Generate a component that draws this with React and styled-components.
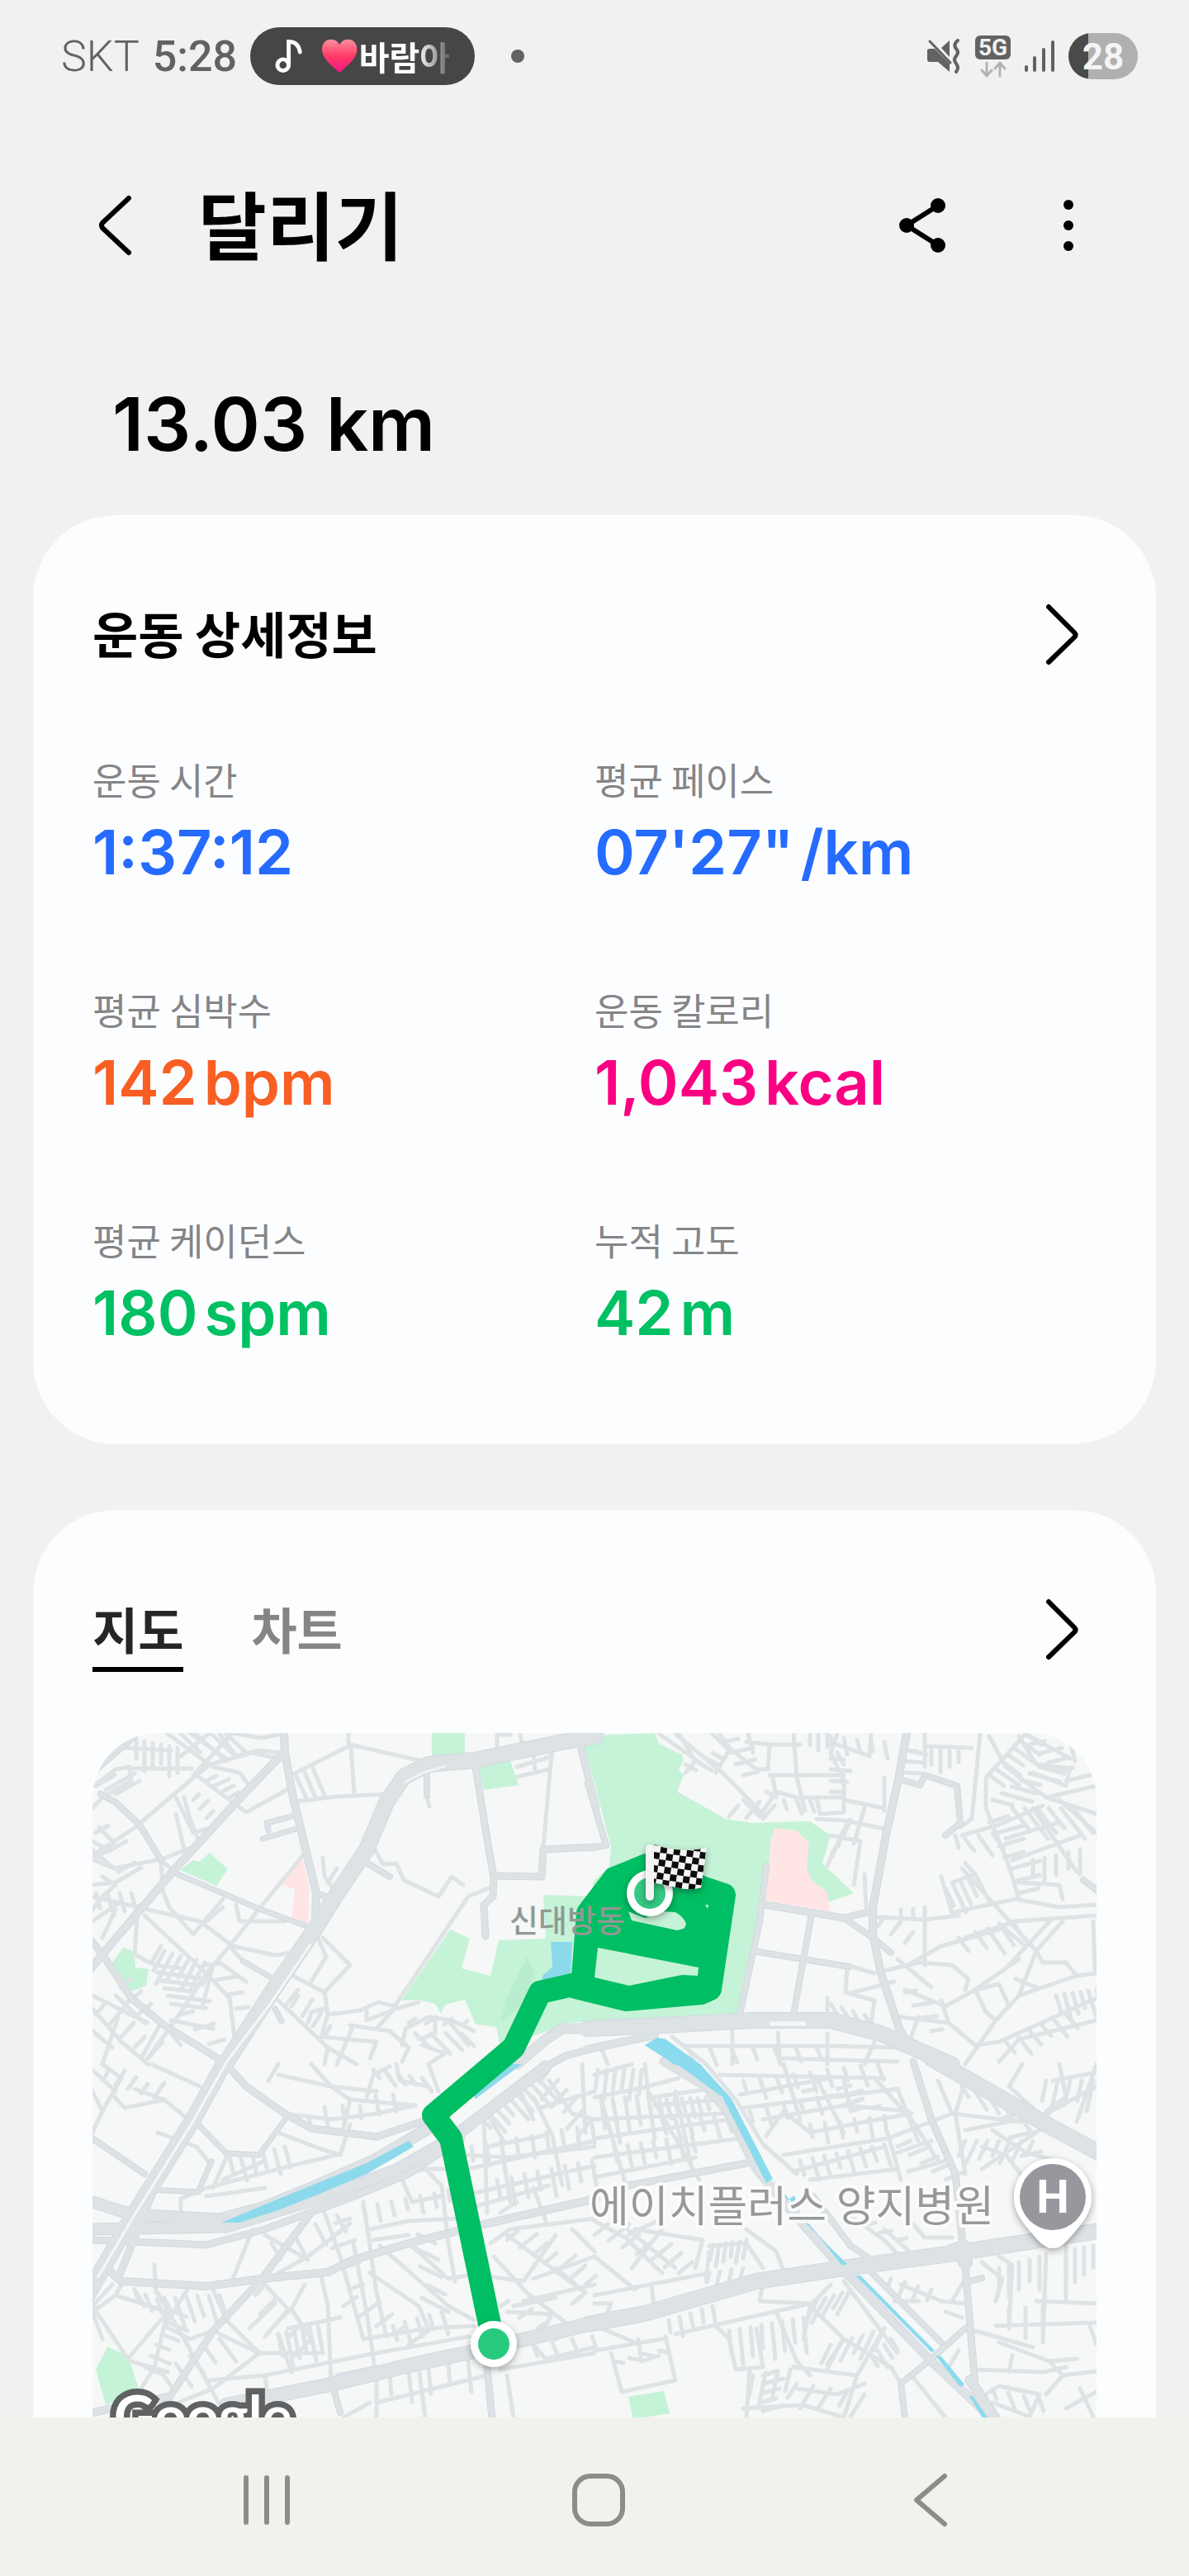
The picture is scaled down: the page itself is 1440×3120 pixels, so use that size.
import React, { useState } from "react";
import styled, { createGlobalStyle } from "styled-components";

const GlobalStyle = createGlobalStyle`
  * {
    box-sizing: border-box;
  }

  body {
    margin: 0;
    background: #f1f1f3;
    font-family: "Noto Sans CJK KR", sans-serif;
  }

  button {
    margin: 0;
    padding: 0;
    border: 0;
    background: none;
    color: inherit;
    font: inherit;
    cursor: pointer;
  }
`;

const Screen = styled.div`
  display: flex;
  flex-direction: column;
  height: 100vh;
  overflow: hidden;
  background: #f1f1f3;
`;

const StatusBar = styled.div`
  display: flex;
  flex: none;
  align-items: center;
  justify-content: space-between;
  height: 136px;
  padding: 0 62px 0 74px;
  color: #626262;
  font-family: Roboto, sans-serif;
  font-size: 52px;
`;

const StatusGroup = styled.div`
  display: flex;
  align-items: center;
  gap: 16px;
`;

const Carrier = styled.span`
  font-weight: 300;
`;

const Clock = styled.span`
  font-weight: 500;
`;

const NowPlaying = styled.div`
  display: flex;
  align-items: center;
  gap: 24px;
  width: 272px;
  height: 70px;
  padding: 0 30px;
  border-radius: 35px;
  background: #454746;
  color: #fff;
`;

const Song = styled.span`
  display: flex;
  align-items: center;
  gap: 2px;
  overflow: hidden;
  font-family: "Noto Sans CJK KR", sans-serif;
  font-size: 40px;
  font-weight: 700;
  line-height: 56px;
  white-space: nowrap;
  mask-image: linear-gradient(90deg, #000 74%, rgba(0, 0, 0, 0.15) 100%);
`;

const Dot = styled.span`
  width: 16px;
  height: 16px;
  margin-left: 28px;
  border-radius: 50%;
  background: #626262;
`;

const Network = styled.div`
  display: flex;
  flex-direction: column;
  align-items: center;
  gap: 2px;
`;

const NetworkBadge = styled.span`
  width: 43px;
  border-radius: 6px;
  background: #626262;
  color: #f1f1f3;
  font-size: 28px;
  font-weight: 700;
  line-height: 29px;
  text-align: center;
`;

const Battery = styled.div`
  width: 84px;
  height: 56px;
  border-radius: 28px;
  background: linear-gradient(90deg, #4a4a4a 28%, #b0b0b0 28%);
  color: #f4f4f4;
  font-size: 44px;
  font-weight: 700;
  line-height: 58px;
  text-align: center;
`;

const Header = styled.header`
  display: flex;
  flex: none;
  align-items: center;
  height: 274px;
  padding: 0 110px 0 104px;
`;

const Title = styled.h1`
  flex: 1;
  margin: 0 0 0 64px;
  padding-bottom: 8px;
  font-size: 90px;
  font-weight: 700;
  line-height: 120px;
`;

const HeaderActions = styled.div`
  display: flex;
  gap: 104px;
`;

const IconButton = styled.button`
  display: flex;
  align-items: center;
  justify-content: center;
  width: ${({ $size }) => $size}px;
  height: ${({ $size }) => $size}px;
`;

const Main = styled.main`
  display: flex;
  flex: 1;
  flex-direction: column;
  gap: 80px;
  min-height: 0;
  padding: 0 40px;
  overflow: hidden;
`;

const Distance = styled.p`
  margin: 50px 0 -24px;
  padding-left: 96px;
  font-family: Inter, sans-serif;
  font-size: 90px;
  font-weight: 600;
  line-height: 108px;
`;

const Card = styled.section`
  flex: none;
  padding: 104px 72px 115px;
  border-radius: 100px;
  background: #fcfdff;
`;

const CardHead = styled.div`
  display: flex;
  align-items: flex-start;
  justify-content: space-between;
  margin-bottom: ${({ $space }) => $space}px;
`;

const CardTitle = styled.h2`
  margin: 0;
  font-size: 60px;
  font-weight: 700;
  line-height: 76px;
`;

const Stats = styled.dl`
  display: grid;
  grid-template-columns: 1fr 1fr;
  row-gap: 120px;
  margin: 0;
`;

const StatLabel = styled.dt`
  margin-bottom: 17px;
  color: #858587;
  font-size: 45px;
  line-height: 54px;
`;

const StatValue = styled.dd`
  display: flex;
  gap: 8px;
  margin: 0;
  color: ${({ $color }) => $color};
  font-family: Inter, sans-serif;
  font-size: 74px;
  font-weight: 600;
  line-height: 88px;
`;

const Tabs = styled.div`
  display: flex;
  gap: 82px;
`;

const Tab = styled.button`
  padding-bottom: 8px;
  border-bottom: 6px solid ${({ $active }) => ($active ? "#000" : "transparent")};
  color: ${({ $active }) => ($active ? "#252527" : "#858587")};
  font-size: 60px;
  font-weight: 700;
  line-height: 78px;
`;

const MapFrame = styled.div`
  overflow: hidden;
  border-radius: 80px;

  svg {
    display: block;
    width: 100%;
  }
`;

const NavBar = styled.nav`
  display: flex;
  flex: none;
  align-items: center;
  justify-content: center;
  gap: 282px;
  height: 192px;
  padding: 8px 0 0 10px;
  background: #f0f2ed;
`;

const STATS = [
  { label: "운동 시간", value: "1:37:12", color: "#256bff" },
  { label: "평균 페이스", value: "07'27\"", unit: "/km", color: "#256bff" },
  { label: "평균 심박수", value: "142", unit: "bpm", color: "#f95e22" },
  { label: "운동 칼로리", value: "1,043", unit: "kcal", color: "#fb0082" },
  { label: "평균 케이던스", value: "180", unit: "spm", color: "#00c064" },
  { label: "누적 고도", value: "42", unit: "m", color: "#00c064" },
];

// Each tile keeps its own coordinates; x, y, sx and sy place it on the map.
// roads: [width, points], combs: [x1, y1, x2, y2, dx, dy, count]
const TILES = [
  {
    x: -12,
    y: -19,
    sx: 0.3954,
    sy: 0.3333,
    parks: [
      "1070,57 1170,57 1170,135 1070,148",
      "1215,180 1310,155 1335,245 1230,265",
      "298,555 340,518 358,525 390,493 445,553 410,612",
      "92,890 125,837 158,850 162,908 202,915 195,975 150,997",
      "1125,770 1185,805 1162,912 1250,940 1275,810 1420,805 1410,645 1572,650 1572,1105 1490,1110 1400,1150 1280,1200 1268,1125 1205,1115 1170,1025 1110,1045 1098,1078 1080,1042 1030,1025 975,1030",
    ],
    shade: ["1360,870 1385,930 1340,1050 1280,1110 1300,1020"],
    pink: ["672,510 695,620 690,755 640,735 650,625 605,605"],
    water: ["1435,817 1500,817 1495,945 1405,960 1408,940 1438,905"],
    minor: [
      "180,380 350,210 390,170 520,130 600,150",
      "30,330 60,290 150,230 145,180 100,190 35,250",
      "260,60 400,180 480,200 510,250",
      "350,210 460,310 500,345 625,265",
      "420,60 470,140 540,120 610,130",
      "330,57 440,150", "390,57 300,140", "460,57 340,210",
      "140,187 335,187", "100,70 130,110 270,120", "470,60 550,75 600,62",
      "30,500 175,390", "30,450 60,470 30,520", "50,400 95,455 40,520",
      "30,515 95,550 240,515 340,470", "95,550 30,480",
      "30,610 100,600 180,545", "60,580 100,610 60,650 30,700",
      "30,650 170,690 245,620 240,515", "170,690 160,860 210,895 240,830",
      "245,630 265,690 340,790 430,660", "100,700 60,800",
      "285,290 340,420 400,400", "310,480 285,350", "360,460 330,370 310,290",
      "240,520 290,570", "540,695 675,500", "30,740 120,670",
      "540,695 450,830 380,930 290,1090 200,1240",
      "190,720 380,930 450,1020 465,1160", "170,690 360,740 460,830 590,865 640,855",
      "470,680 480,740 620,740", "450,830 490,885", "380,740 430,690",
      "735,510 740,580 770,625", "780,550 750,600",
      "650,205 815,105 815,57", "820,100 1040,160", "822,110 832,270",
      "650,305 780,288 930,280", "655,215 685,295", "680,200 712,290", "705,185 742,282",
      "1440,100 1410,470", "1270,110 1270,62 1310,62", "1340,60 1345,100",
      "1330,180 1440,140", "1330,215 1430,190", "1380,130 1385,200",
      "1055,285 1062,325",
      "895,480 920,535 960,530 985,590 1090,650 1130,580 1165,610",
      "1245,620 1180,650 960,1040",
      "720,800 745,870 700,960", "735,800 820,900 740,1000 750,1080",
      "630,930 740,1000", "600,1030 750,1200 840,1260",
      "750,1080 850,1065 905,1035 960,1050 900,1130",
      "750,1080 730,1160 900,1180", "620,1050 660,990", "690,1110 700,1070 740,1060",
      "870,1060 870,1100 960,1060 1030,1035",
      "820,1120 940,1140 1000,1200 980,1250",
      "980,1190 990,1130 1060,1090 1130,1100 1200,1140",
      "1080,1100 1080,1150 1030,1170", "1120,1100 1180,1190",
      "780,1260 830,1120", "900,1180 880,1240", "1040,1190 1110,1220 1060,1260",
      "30,1010 200,1110", "30,1060 120,1180 200,1260", "110,1090 60,1260",
      "240,1110 180,1240", "30,1140 90,1200", "250,1120 300,1190",
      "420,890 500,960", "400,900 370,1040", "270,1100 400,1130",
      "750,1200 740,1260", "100,1010 190,1110",
    ],
    combs: [
      [165, 80, 290, 110, 0, 110, 6], [40, 250, 100, 280, 90, -60, 3],
      [380, 230, 450, 290, 45, -25, 4], [340, 300, 400, 400, 25, -30, 4],
      [220, 900, 270, 1040, 130, 20, 6], [250, 850, 400, 900, -50, 110, 7],
      [40, 1080, 200, 1240, 45, -60, 5], [300, 60, 440, 60, 90, 100, 4],
      [640, 1050, 740, 1160, 30, -60, 4], [150, 950, 210, 1040, -50, 50, 3],
      [1000, 1110, 1160, 1120, 30, -25, 4], [300, 1080, 430, 1240, 60, -20, 4],
      [40, 420, 110, 560, 60, -40, 3], [40, 640, 150, 640, 20, 80, 4],
      [1020, 1150, 1160, 1150, 60, 70, 4], [380, 900, 470, 1060, 60, -10, 4],
    ],
    roads: [
      [8, "30,200 160,70"],
      [10, "610,135 500,270 290,540 60,860 0,950"],
      [10, "618,57 620,130 645,290 715,640 712,720"],
      [9, "1205,180 1245,480 1260,580 1258,650 1228,680 1235,795"],
      [9, "1260,575 1405,578 1410,480 1572,470"],
      [9, "1520,80 1572,330"],
      [8, "55,280 100,310 175,390 240,520"],
      [7, "290,570 540,695 680,755"],
      [7, "650,358 565,385 568,412"], [7, "655,405 552,442"],
      [8, "1055,190 1055,285"],
      [9, "30,815 60,860 150,1020 250,1120 430,1250"],
      [8, "865,525 940,578"], [7, "490,885 590,955"], [7, "590,1060 610,1105"],
      [8, "715,640 750,655 785,640"],
      [13, "1572,1130 1470,1130 1420,1170 1330,1260"],
      [9, "1572,1200 1480,1230 1430,1262"],
      [20, "1572,68 1470,90 1200,155 1060,170 985,215 930,310 870,480 770,660 710,770 580,1000 435,1262"],
    ],
  },
  {
    x: 608,
    y: -19,
    sx: 0.4082,
    sy: 0.3333,
    parks: [
      "-35,90 0,65 180,57 190,95 260,135 265,155 250,190 265,210 245,270 390,370 470,385 530,380 640,378 700,430 675,530 770,640 697,668 560,650 515,540 430,1085 -5,1105 -5,600 45,540 50,470 0,240",
    ],
    shade: [],
    pink: ["535,402 600,410 638,455 630,550 645,590 690,635 697,705 510,665 522,450"],
    water: ["150,1190 185,1165 210,1170 315,1264 240,1264"],
    minor: [
      "240,60 380,200 500,350", "190,60 330,180", "250,60 300,160 270,200", "350,60 400,120 360,200",
      "370,57 400,110 480,190 515,190 520,100 450,90", "455,57 470,130",
      "520,210 740,210", "530,220 540,290 510,270", "440,300 490,360 540,270 600,290 740,290",
      "590,60 600,220 625,340", "610,100 520,100", "660,290 670,350 740,345 740,230 700,130 720,60",
      "720,100 815,140 820,60", "740,170 720,130", "740,300 860,330", "660,370 740,375 860,405",
      "700,430 790,450 770,610", "800,330 770,460", "800,570 805,690", "860,220 860,340",
      "925,120 985,135", "980,60 980,180", "985,105 1120,110", "1145,60 1120,370 1085,400",
      "1170,70 1220,180 1340,290 1490,350", "1160,220 1280,60", "1160,230 1160,330 1230,540 1260,660",
      "1260,70 1310,170 1410,185 1400,250 1300,200", "1410,90 1425,160", "1280,60 1410,150",
      "1090,430 1200,390 1330,320", "1070,430 1080,475", "1220,440 1380,380", "1240,520 1440,430",
      "1260,600 1380,610 1390,660", "1300,330 1430,560", "1380,300 1490,420", "1340,290 1490,250",
      "1030,580 1060,710 1100,700 1250,660 1380,690 1490,680",
      "840,725 980,735 1080,720", "1060,600 1130,570 1100,530", "1090,550 1200,700 1310,850",
      "1100,800 1250,740 1490,720", "1480,740 1485,920", "1390,740 1310,850 1330,890 1400,890 1430,940",
      "1260,1010 1430,940 1490,930", "1310,850 1260,1010 1190,1100 1140,1190",
      "930,900 1030,830 1200,770", "860,920 960,890 1060,900 1110,950 1100,990",
      "920,990 1040,1050 1130,990 1260,880", "1130,990 1160,1070 1190,1100 1230,1050 1200,970 1130,990",
      "910,1090 1050,1110 1130,1190 1200,1180", "960,1090 930,1190", "1050,1110 1030,1030",
      "750,910 745,1000 830,1030 820,1110", "770,1000 890,960", "830,930 750,900", "690,1020 690,1090",
      "1200,1180 1490,1020", "1140,1190 1100,1260", "1200,1250 1260,1170 1490,1100",
      "980,710 980,900", "900,880 1000,980", "1080,800 1110,850", "1200,750 1280,830",
      "410,1140 410,1260", "545,1145 550,1260", "690,1150 690,1260", "270,1195 700,1195 900,1200",
      "230,1160 330,1260", "830,1180 800,1260", "560,1240 900,1250", "20,1200 40,1260",
      "1310,980 1250,950", "1360,730 1230,900",
    ],
    combs: [
      [270, 170, 350, 130, 50, 35, 4], [640, 62, 690, 60, 0, 60, 3], [560, 300, 640, 300, 15, 50, 3],
      [700, 150, 700, 270, 60, 5, 4], [690, 540, 740, 430, 30, -90, 4], [910, 700, 980, 690, 0, 30, 3],
      [920, 120, 920, 200, 60, 5, 3], [1000, 120, 1080, 110, 0, 80, 4],
      [1170, 210, 1280, 60, 70, 60, 7], [1180, 300, 1320, 180, 90, 30, 6],
      [1170, 380, 1260, 640, 90, -30, 7], [1240, 330, 1420, 330, 70, 110, 6],
      [1040, 620, 1130, 570, 40, 100, 5], [1300, 520, 1440, 480, 0, 90, 5],
      [1290, 100, 1400, 230, 70, -20, 5], [1370, 1010, 1490, 990, 20, 90, 6],
      [1220, 1180, 1400, 1080, 40, 60, 6], [840, 760, 920, 820, 30, -50, 3],
      [920, 1000, 1000, 1140, 50, -10, 4], [400, 360, 500, 370, 40, -60, 3],
      [700, 1040, 800, 1080, 30, 60, 4], [1100, 440, 1180, 420, 40, 70, 3],
      [700, 70, 860, 90, 10, 60, 5], [380, 90, 440, 210, 70, -20, 4],
      [280, 1205, 660, 1200, 20, 60, 7], [1130, 780, 1240, 740, 50, 90, 4],
    ],
    roads: [
      [10, "925,57 905,210 865,430 825,690 825,790 850,930 905,1130 935,1200"],
      [8, "905,225 965,245 980,210 1075,250 1085,385 1040,430"],
      [9, "505,680 740,730 820,705"], [8, "740,730 825,800 880,855"],
      [8, "510,540 490,740 430,1080"], [8, "645,715 620,880 590,1080"],
      [8, "470,848 755,905"], [8, "-20,240 35,465 -10,475"],
      [10, "-20,1205 180,1155"], [8, "1450,590 1492,630"],
      [20, "-20,1132 200,1120 470,1100 700,1102 850,1150 1000,1230 1060,1264"],
    ],
  },
  {
    x: -12,
    y: 401,
    sx: 0.3954,
    sy: 0.3333,
    parks: ["75,1025 140,1060 172,1180 160,1200 70,1240 40,1110"],
    shade: [],
    pink: [],
    water: [
      "425,577 480,575 600,530 720,475 870,400 1015,300 1000,280 870,360 700,440 560,510",
      "1205,125 1345,0 1310,0 1195,115",
    ],
    minor: [
      "30,100 60,170 30,250", "60,170 120,50 60,0", "90,110 130,160 250,130 310,190", "210,0 360,80",
      "160,90 250,130", "30,20 100,100", "600,250 730,310 790,330 820,220", "570,60 600,0",
      "600,40 760,80 900,100", "620,180 760,200 900,180 1020,150", "700,0 760,80 820,130 1020,150",
      "870,120 890,40 940,10", "820,130 800,230", "960,0 970,60 1060,80", "1060,0 1090,100",
      "230,250 350,300 390,360", "380,450 640,370 780,330", "380,450 300,490 300,540", "440,340 400,450",
      "380,480 560,450", "430,420 560,350",
      "560,620 690,710", "740,540 790,700 860,1000", "860,500 880,660 900,830 930,990",
      "600,760 690,700 820,580", "830,650 870,900 900,1150",
      "1050,380 1100,440 1120,650 1140,790", "880,600 1000,570 1150,560", "890,640 1000,620",
      "910,660 1120,880 1200,930", "1000,650 1120,780 1220,760", "880,760 1030,880 1060,960",
      "980,420 1010,500 1100,480", "30,880 90,800", "30,880 140,1070 260,900 100,840",
      "230,830 320,1020 420,1240", "120,800 100,840 30,900", "400,820 440,930 540,1050",
      "400,970 540,1050 730,1050", "540,1050 400,1180 230,1260", "260,900 220,1100 180,1180",
      "320,820 250,950 330,1000 400,970", "550,790 630,890 560,990", "680,800 640,890 700,1000",
      "730,770 750,880 760,1150", "590,870 510,960", "860,1000 1060,960 1200,950", "630,960 790,920",
      "390,1150 560,1130 860,1060 1180,990", "600,980 640,1120", "780,1130 900,1100",
      "900,1150 900,1284", "1030,1100 1050,1284", "900,1230 1240,1130", "560,1130 570,1230",
      "1250,650 1310,600 1568,560", "1280,540 1330,500", "1300,620 1540,830", "1260,700 1360,830 1480,940",
      "1240,770 1350,790 1450,620", "1350,860 1568,800", "1320,880 1450,850", "1300,900 1440,910 1400,980",
      "1380,1020 1420,1070 1568,1030", "1280,1110 1568,1050", "1300,1130 1320,1284", "1500,600 1568,680",
      "1380,780 1568,700", "1450,740 1540,830 1500,870", "1240,300 1410,260", "1180,380 1568,280",
      "1170,330 1300,340 1568,300", "1190,470 1568,370", "1200,520 1430,440", "1230,200 1240,540",
      "1290,350 1310,500", "1380,120 1440,260 1470,440", "1430,60 1500,180 1568,200", "1240,180 1290,280",
      "1340,100 1380,200", "1530,0 1540,250", "1568,100 1400,160", "1380,450 1420,570",
      "800,1284 880,1230", "520,600 460,780", "220,730 225,830", "160,820 190,880",
      "150,1080 260,1120", "1130,380 1050,380 1000,400", "30,900 60,1000",
    ],
    combs: [
      [450, 340, 620, 300, 20, 90, 6], [890, 20, 1040, 50, 30, 50, 5], [860, 520, 1120, 460, 10, 60, 7],
      [600, 980, 720, 950, 20, 120, 6], [250, 850, 420, 840, 30, 110, 6], [280, 900, 190, 1100, 60, 30, 6],
      [1210, 180, 1400, 60, 60, 80, 9], [1430, 20, 1560, 200, -50, 70, 6], [1190, 300, 1560, 220, 10, 80, 9],
      [1270, 420, 1560, 350, 15, 100, 8], [1300, 640, 1540, 800, 50, -50, 7], [800, 880, 1000, 1020, 60, -50, 5],
      [160, 820, 260, 870, 20, 60, 4], [560, 800, 700, 1000, -50, 60, 5], [700, 240, 960, 170, -10, -70, 6],
      [940, 1130, 1180, 1080, 10, 110, 5], [1280, 880, 1450, 1000, 40, -30, 4], [60, 60, 220, 120, 30, -50, 5],
      [1080, 650, 1120, 900, -80, -50, 5], [820, 560, 860, 800, -70, 30, 4], [950, 950, 1100, 900, 20, 80, 5],
      [580, 650, 780, 550, 40, 90, 4], [1380, 1020, 1560, 990, 20, 60, 4], [240, 1120, 420, 1000, 50, 80, 5],
    ],
    roads: [
      [9, "440,0 500,80 620,180 700,235 900,265 1060,200"],
      [7, "340,200 440,325 540,330 630,185"], [7, "210,455 355,465 395,355"], [8, "30,270 190,400"],
      [15, "30,500 150,545 420,565 560,520 700,450 900,345 1080,220"],
      [15, "30,600 440,592 720,490 960,385 1130,270 1420,10"],
      [9, "30,640 380,658 560,600 820,485 1000,400 1160,270"],
      [10, "75,745 120,790 380,808 550,780 750,755 830,710 1000,650 1240,580 1572,490"],
      [9, "700,540 550,780 400,970 260,1220"],
      [18, "440,1240 760,1165 1000,1095 1200,1045 1572,940"], [10, "30,1265 260,1210"],
      [9, "1240,1100 1255,1290"], [8, "770,1180 790,1265"],
      [9, "230,420 110,780"],
      [20, "435,-6 340,200 150,560 10,850"],
    ],
  },
  {
    x: 608,
    y: 401,
    sx: 0.4082,
    sy: 0.3333,
    parks: ["100,1210 207,1187 222,1270 115,1290"],
    shade: [],
    pink: [],
    water: [],
    minor: [
      "0,120 130,90 250,50", "0,40 110,0", "150,0 160,100 310,420", "20,130 90,430",
      "180,120 340,90", "180,150 370,130", "0,200 380,180", "0,270 400,200", "0,340 430,270", "0,410 300,340",
      "240,100 290,380", "330,0 420,130 500,290 600,400", "370,40 860,50", "430,110 700,50", "440,160 900,90",
      "500,200 740,150 930,170", "510,260 560,170 640,250 800,210 940,180", "560,330 870,270 1060,180 1270,210",
      "590,390 860,300", "640,420 900,380", "560,0 610,200", "660,50 740,250", "740,60 760,160",
      "830,50 940,200 1020,350", "900,90 960,280", "870,250 910,420", "900,320 1000,280", "930,390 1040,350",
      "1070,180 1100,400", "1020,60 1060,180", "1100,240 1350,180", "1150,300 1220,330 1290,440",
      "1150,380 1320,240", "1100,60 1070,180", "1180,240 1280,320 1400,360", "1270,0 1230,80 1300,160",
      "1360,60 1490,30", "1340,180 1490,80", "1430,210 1490,0", "1380,0 1400,120 1340,170",
      "0,570 90,630 200,760", "60,560 240,740", "120,600 320,640 300,740", "0,700 120,820", "0,840 340,760",
      "200,600 110,740", "340,680 330,780", "340,660 450,650 500,740", "450,600 540,680 560,750",
      "170,800 180,900", "0,1040 200,1000", "50,1050 80,1190 240,1150 210,990", "130,1000 140,1080 190,1060",
      "20,960 120,1010", "360,950 400,1000 420,1110 500,1100 480,960", "460,1110 450,1284",
      "240,980 640,870", "500,790 490,860 640,870", "540,900 600,1080 640,1130", "640,880 740,1000 690,1090",
      "700,800 640,880 620,1000", "740,790 900,1050", "740,1000 880,1100 910,1160", "590,1100 780,1130 740,1284",
      "600,1180 720,1200 800,1160", "440,1250 620,1240 740,1284", "940,1130 1040,1284", "860,960 780,1130",
      "910,800 1030,860", "960,860 890,860", "1030,860 1100,870", "930,560 980,630 1060,630",
      "770,560 860,640 900,690", "950,700 860,600", "1150,720 1210,780 1190,860", "1200,700 1240,730 1230,950",
      "1190,950 1490,940", "1340,690 1330,1010", "1400,660 1400,860", "1310,860 1490,870", "1470,950 1490,1020",
      "1130,970 1300,1030", "1200,1010 1350,1080 1430,1070", "1240,1060 1230,1120", "1130,1110 1330,1120 1400,1100",
      "1350,1080 1390,1130 1340,1200", "1160,1200 1200,1170 1320,1200 1290,1280 1180,1230", "1390,1130 1490,1115",
      "1400,1250 1490,1190", "1440,1180 1480,1280", "1040,900 1090,920", "0,870 50,870 30,930",
      "100,620 200,560", "1080,1040 1050,1100", "1060,860 1100,780",
    ],
    combs: [
      [10, 20, 140, 20, -10, 110, 6], [20, 130, 160, 110, 20, 160, 5], [190, 130, 330, 120, 15, 70, 7],
      [60, 300, 290, 260, 15, 90, 7], [200, 200, 390, 180, 20, 80, 6], [440, 60, 840, 0, 20, 70, 9],
      [460, 170, 660, 120, 15, 60, 5], [720, 90, 760, 170, 60, -20, 4], [610, 350, 860, 290, 20, 80, 8],
      [640, 220, 860, 190, 10, 70, 6], [900, 300, 1040, 420, 60, -30, 5], [1090, 80, 1260, 180, 30, 60, 5],
      [1100, 280, 1300, 280, -30, 80, 7], [1340, 60, 1480, 60, -20, 110, 5], [1200, 200, 1300, 400, 70, -20, 4],
      [350, 660, 450, 640, -10, 80, 6], [0, 620, 250, 760, 60, -60, 7], [340, 760, 440, 740, -10, 50, 4],
      [220, 930, 350, 880, 10, 70, 5], [400, 970, 620, 920, 10, 130, 8], [660, 860, 760, 820, -40, 90, 5],
      [700, 1020, 860, 960, -40, 100, 6], [470, 1130, 580, 1110, -20, 120, 4], [600, 1160, 800, 1200, -40, 80, 5],
      [1200, 740, 1320, 700, 0, 120, 5], [1400, 680, 1480, 660, 0, 120, 4], [1230, 890, 1330, 880, 0, 110, 3],
      [880, 780, 1000, 820, -20, 60, 4], [60, 1080, 190, 1040, 40, 10, 4], [500, 1130, 500, 1260, 60, -20, 5],
      [1180, 1180, 1320, 1220, 20, 60, 4], [820, 1060, 880, 1000, 30, 60, 4], [620, 100, 820, 160, 40, -10, 4],
      [740, 560, 900, 640, 40, -10, 4],
    ],
    roads: [
      [9, "945,-10 1000,200 1070,400 1090,630 1100,740 1115,950 1130,1170"],
      [11, "205,-10 330,80 400,180 480,380 560,500 740,750 1000,1080 1180,1290"],
      [8, "650,480 760,660 820,710 870,715"], [8, "820,755 1030,1010"],
      [8, "1100,960 1000,1070 910,1160 920,1290"], [13, "1115,1150 1190,1290"],
      [9, "100,440 450,360"], [8, "1115,790 1150,778"],
      [20, "-20,945 150,905 480,790 740,740 1050,690 1500,605"],
      [18, "1060,680 1095,665 1100,720"],
      [20, "1000,-20 1200,120 1350,225 1500,325"],
    ],
  },
];

const RIVER = [
  "708,401 736,401 774,443 824,540 816,545 763,441",
  "824,540 842,566 850,560 860,590 914,643 908,645",
  "924,657 930,657 1020,748 1016,750",
  "1021,754 1028,755 1056,789 1051,792",
  "1062,803 1066,803 1096,846 1088,846",
];

const project = (tile, points) =>
  points
    .split(" ")
    .map((pair) => {
      const [x, y] = pair.split(",").map(Number);
      return `${Math.round(tile.x + x * tile.sx)},${Math.round(tile.y + y * tile.sy)}`;
    })
    .join(" ");

const combLines = ([x1, y1, x2, y2, dx, dy, count]) =>
  Array.from({ length: count }, (_, i) => {
    const t = i / (count - 1);
    const reach = 0.65 + 0.35 * (((i * 5) % 3) / 2);
    const x = x1 + (x2 - x1) * t;
    const y = y1 + (y2 - y1) * t;
    return `${x},${y} ${x + dx * reach},${y + dy * reach}`;
  });

const Areas = ({ kind, fill }) =>
  TILES.flatMap((tile, t) =>
    tile[kind].map((area, i) => (
      <polygon key={`${t}-${i}`} points={project(tile, area)} fill={fill} />
    ))
  );

const Streets = () => (
  <g fill="none" stroke="#dfe3e6" strokeWidth="5" strokeLinecap="round" strokeLinejoin="round">
    {TILES.flatMap((tile, t) =>
      [...tile.minor, ...tile.combs.flatMap(combLines)].map((line, i) => (
        <polyline key={`${t}-${i}`} points={project(tile, line)} />
      ))
    )}
  </g>
);

const Roads = ({ color, inset }) => (
  <g fill="none" stroke={color} strokeLinecap="round" strokeLinejoin="round">
    {TILES.flatMap((tile, t) =>
      tile.roads.map(([width, line], i) => (
        <polyline key={`${t}-${i}`} points={project(tile, line)} strokeWidth={width - inset} />
      ))
    )}
  </g>
);

const FinishFlag = () => (
  <g>
    <g transform="translate(681 133) rotate(8)">
      <path d="M0 2 Q16 6 34 4 T63 -3 V46 Q50 52 34 50 T0 48Z" fill="#f4f4f4" />
      <clipPath id="flag">
        <path d="M0 2 Q16 6 34 4 T63 -3 V46 Q50 52 34 50 T0 48Z" />
      </clipPath>
      <g clipPath="url(#flag)" fill="#0b0b0b">
        {Array.from({ length: 64 }, (_, i) => {
          const col = i % 8;
          const row = Math.floor(i / 8);
          return (col + row) % 2 === 0 ? (
            <rect key={i} x={col * 8} y={row * 8 - 5} width="8" height="8" />
          ) : null;
        })}
      </g>
    </g>
    <path d="M675 140V198" stroke="#f4f4f4" strokeWidth="10" strokeLinecap="round" />
  </g>
);

const RouteMap = () => (
  <MapFrame>
    <svg viewBox="0 0 1216 912" role="img" aria-label="지도">
      <defs>
        <filter id="shadow" x="-30%" y="-30%" width="160%" height="160%">
          <feDropShadow dx="0" dy="3" stdDeviation="4" floodOpacity="0.35" />
        </filter>
      </defs>
      <rect width="1216" height="912" fill="#f6f7f7" />
      <Areas kind="parks" fill="#c5f3d7" />
      <Areas kind="shade" fill="#b9edcf" />
      <Areas kind="pink" fill="#ffe5e3" />
      <Streets />
      <Roads color="#d3d9e1" inset={0} />
      <Roads color="#dde2e5" inset={2} />
      <g fill="none" stroke="#f6f7f7" strokeWidth="3">
        <path d="M264 256 214 330 164 396 120 473 50 585 6 660" />
        <path d="M820 352H864" strokeWidth="5" />
        <path d="M378 60 400 48 428 40" strokeWidth="2" />
      </g>
      <Areas kind="water" fill="#8dd9ec" />
      <g fill="#8adbed">
        <polygon points="669,378 684,369 694,371 737,402 706,402" />
        {RIVER.map((points) => (
          <polygon key={points} points={points} />
        ))}
      </g>

      <g stroke="#00be63" strokeWidth="28" strokeLinecap="round" strokeLinejoin="round">
        <polyline points="486,740 434,491 413,463 510,381 542,314 590,303" fill="none" />
        <polygon
          points="594,296 600,218 632,176 671,160 741,188 765,196 748,310 737,315 646,323 585,308"
          fill="#00be63"
        />
      </g>
      <g fill="#c5f3d7">
        <polygon points="612,260 734,284 733,294 714,293 650,306 608,296" />
        <path d="M649 216 669 224 690 216 706 217 Q718 224 719 232 L716 237 708 239 653 227Z" />
        <path d="M742 208 746 208 745 213Z" />
      </g>

      <g filter="url(#shadow)">
        <circle cx="486" cy="740" r="28" fill="#fff" />
        <circle cx="675" cy="194" r="28" fill="#fff" />
        <path
          d="M1163 515a47 47 0 0 1 47 47c0 19-12 33-29 52q-18 20-36 0c-17-19-29-33-29-52a47 47 0 0 1 47-47Z"
          fill="#fff"
        />
      </g>
      <circle cx="486" cy="740" r="19" fill="#27ca7c" />
      <circle cx="675" cy="194" r="19" fill="#35c983" />
      <g filter="url(#shadow)">
        <FinishFlag />
      </g>
      <circle cx="1163" cy="562" r="40" fill="#96989d" />

      <text
        x="1163"
        y="581"
        fill="#fff"
        fontFamily="Roboto, sans-serif"
        fontSize="56"
        fontWeight="700"
        textAnchor="middle"
      >
        H
      </text>
      <text x="505" y="241" fill="#8f9a94" fontSize="38" fontWeight="500">
        신대방동
      </text>
      <text
        x="602"
        y="592"
        fill="#98999b"
        stroke="#fbfbfc"
        strokeWidth="8"
        strokeLinejoin="round"
        paintOrder="stroke"
        fontSize="52"
      >
        에이치플러스 양지병원
      </text>
      <text
        x="26"
        y="852"
        fill="#fff"
        stroke="#606162"
        strokeWidth="15"
        paintOrder="stroke"
        fontFamily="Lato, sans-serif"
        fontSize="68"
        fontWeight="700"
      >
        Google
      </text>
    </svg>
  </MapFrame>
);

const ChevronRight = () => (
  <svg width="46" height="80" viewBox="0 0 46 80" fill="none" stroke="#000" strokeWidth="6" strokeLinecap="round" strokeLinejoin="round">
    <path d="M7 5 38 36q3 3 0 6L7 72" />
  </svg>
);

const StatusIcons = () => (
  <StatusGroup>
    <svg width="42" height="42" viewBox="0 0 42 42" fill="#626262">
      <path d="M0 14Q0 12 3 12H9L27 30V40L13 28H3Q0 28 0 25Z" />
      <path d="M27 2V22L17 11Z" />
      <path d="M3 3 28 29" stroke="#626262" strokeWidth="3" strokeLinecap="round" />
      <path
        d="M37 2q-6 5-2 10 4 4 0 9-4 4 0 9 4 5 0 10"
        fill="none"
        stroke="#626262"
        strokeWidth="4"
        strokeLinecap="round"
      />
    </svg>
    <Network>
      <NetworkBadge>5G</NetworkBadge>
      <svg width="34" height="20" viewBox="0 0 34 20" fill="none" stroke="#b3b3b5" strokeWidth="3" strokeLinecap="round" strokeLinejoin="round">
        <path d="M9 2V17M3 11 9 18 15 11M25 18V3M19 9 25 2 31 9" />
      </svg>
    </Network>
    <svg width="38" height="42" viewBox="0 0 38 42" fill="none" stroke="#626262" strokeWidth="4" strokeLinecap="round">
      <path d="M3 34V38M13 23V38M24 13V38M35 4V38" />
    </svg>
    <Battery>28</Battery>
  </StatusGroup>
);

const App = () => {
  const [tab, setTab] = useState("지도");

  return (
    <Screen>
      <GlobalStyle />
      <StatusBar>
        <StatusGroup>
          <Carrier>SKT</Carrier>
          <Clock>5:28</Clock>
          <NowPlaying>
            <svg width="34" height="42" viewBox="0 0 34 42" fill="none" stroke="#fff" strokeWidth="5" strokeLinecap="round">
              <ellipse cx="10" cy="32" rx="7" ry="7" />
              <path d="M17 32V3Q29 3 31 16" />
            </svg>
            <Song>
              <svg width="46" height="46" viewBox="0 0 46 46">
                <defs>
                  <linearGradient id="heart" x2="0" y2="1">
                    <stop offset="0" stopColor="#ff8fa0" />
                    <stop offset="0.5" stopColor="#ff3b64" />
                    <stop offset="1" stopColor="#f5128a" />
                  </linearGradient>
                </defs>
                <path
                  d="M23 45C14 36 0 27 0 14 0 6 5 1 12 1c5 0 9 3 11 7 2-4 6-7 11-7 7 0 12 5 12 13 0 13-14 22-23 31Z"
                  fill="url(#heart)"
                />
              </svg>
              바람아
            </Song>
          </NowPlaying>
          <Dot />
        </StatusGroup>
        <StatusIcons />
      </StatusBar>

      <Header>
        <IconButton $size={72} aria-label="뒤로">
          <svg width="44" height="80" viewBox="0 0 44 80" fill="none" stroke="#000" strokeWidth="6" strokeLinecap="round" strokeLinejoin="round">
            <path d="M38 7 6 37q-2 3 0 6L38 73" />
          </svg>
        </IconButton>
        <Title>달리기</Title>
        <HeaderActions>
          <IconButton $size={72} aria-label="공유">
            <svg width="60" height="68" viewBox="0 0 60 68">
              <path d="M48 10 10 34 48 58" fill="none" stroke="#000" strokeWidth="6" />
              <circle cx="48" cy="10" r="9" />
              <circle cx="10" cy="34" r="9" />
              <circle cx="48" cy="58" r="9" />
            </svg>
          </IconButton>
          <IconButton $size={72} aria-label="더보기">
            <svg width="14" height="64" viewBox="0 0 14 64">
              <circle cx="7" cy="7" r="6" />
              <circle cx="7" cy="32" r="6" />
              <circle cx="7" cy="57" r="6" />
            </svg>
          </IconButton>
        </HeaderActions>
      </Header>

      <Main>
        <Distance>13.03 km</Distance>
        <Card>
          <CardHead $space={105}>
            <CardTitle>운동 상세정보</CardTitle>
            <IconButton $size={84} aria-label="운동 상세정보 열기">
              <ChevronRight />
            </IconButton>
          </CardHead>
          <Stats>
            {STATS.map(({ label, value, unit, color }) => (
              <div key={label}>
                <StatLabel>{label}</StatLabel>
                <StatValue $color={color}>
                  <span>{value}</span>
                  {unit && <span>{unit}</span>}
                </StatValue>
              </div>
            ))}
          </Stats>
        </Card>

        <Card>
          <CardHead $space={74}>
            <Tabs role="tablist">
              {["지도", "차트"].map((name) => (
                <Tab
                  key={name}
                  role="tab"
                  aria-selected={tab === name}
                  $active={tab === name}
                  onClick={() => setTab(name)}
                >
                  {name}
                </Tab>
              ))}
            </Tabs>
            <IconButton $size={84} aria-label="지도 열기">
              <ChevronRight />
            </IconButton>
          </CardHead>
          <RouteMap />
        </Card>
      </Main>

      <NavBar>
        <IconButton $size={120} aria-label="최근 앱">
          <svg width="60" height="64" viewBox="0 0 60 64" stroke="#8b8d88" strokeWidth="6" strokeLinecap="round">
            <path d="M5 5V59M30 5V59M55 5V59" />
          </svg>
        </IconButton>
        <IconButton $size={120} aria-label="홈">
          <svg width="66" height="66" viewBox="0 0 66 66" fill="none" stroke="#8b8d88" strokeWidth="6">
            <rect x="4" y="4" width="58" height="58" rx="19" />
          </svg>
        </IconButton>
        <IconButton $size={120} aria-label="이전">
          <svg width="44" height="66" viewBox="0 0 44 66" fill="none" stroke="#8b8d88" strokeWidth="6" strokeLinecap="round" strokeLinejoin="round">
            <path d="M39 4 5 33 39 62" />
          </svg>
        </IconButton>
      </NavBar>
    </Screen>
  );
};

export default App;
